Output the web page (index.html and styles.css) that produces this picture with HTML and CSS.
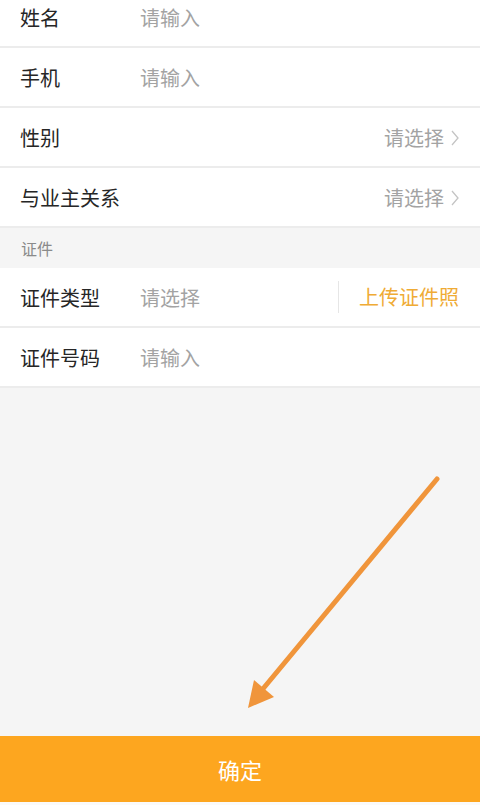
FILE: index.html
```html
<!DOCTYPE html>
<html lang="zh">
<head>
<meta charset="utf-8">
<link rel="stylesheet" href="styles.css">
</head>
<body>
<div class="page">
  <div class="list">
    <div class="row first"><span class="label">姓名</span><span class="ph">请输入</span></div>
    <div class="row"><span class="label">手机</span><span class="ph">请输入</span></div>
    <div class="row"><span class="label">性别</span><span class="select">请选择<svg class="chev" viewBox="0 0 8 16" width="8" height="16"><path d="M1 1 L7 8 L1 15" fill="none" stroke="#c4c4c4" stroke-width="1.3"/></svg></span></div>
    <div class="row"><span class="label">与业主关系</span><span class="select">请选择<svg class="chev" viewBox="0 0 8 16" width="8" height="16"><path d="M1 1 L7 8 L1 15" fill="none" stroke="#c4c4c4" stroke-width="1.3"/></svg></span></div>
    <div class="section">证件</div>
    <div class="row"><span class="label">证件类型</span><span class="ph grow">请选择</span><span class="upload">上传证件照</span></div>
    <div class="row"><span class="label">证件号码</span><span class="ph">请输入</span></div>
  </div>
  <div class="spacer"></div>
  <div class="btn">确定</div>
  <div class="foot"></div>
  <svg class="arrow" width="480" height="805" viewBox="0 0 480 805">
    <line x1="437" y1="479" x2="262" y2="690" stroke="#f0953b" stroke-width="5" stroke-linecap="round"/>
    <polygon points="248,708 254,680 274,697" fill="#f0953b"/>
  </svg>
</div>
</body>
</html>
```
FILE: styles.css
```css
html, body {
  margin: 0;
  padding: 0;
}
body {
  font-family: "Noto Sans CJK SC", "Noto Sans", sans-serif;
  background: #f5f5f5;
  overflow: hidden;
}
.page {
  position: relative;
  width: 480px;
  height: 805px;
  display: flex;
  flex-direction: column;
  overflow: hidden;
}
.list {
  display: flex;
  flex-direction: column;
  margin-top: -12px;
}
.row {
  height: 58px;
  border-bottom: 2px solid #ececec;
  background: #fff;
  display: flex;
  align-items: center;
  padding: 0 21px 0 20px;
  font-size: 20px;
}
.label {
  width: 120px;
  color: #262626;
  flex-shrink: 0;
}
.ph {
  color: #a3a3a3;
}
.grow {
  flex: 1;
}
.select {
  margin-left: auto;
  color: #a3a3a3;
  display: flex;
  align-items: center;
  gap: 7px;
}
.chev {
  display: block;
  margin-top: 1px;
}
.upload {
  color: #efab35;
  border-left: 1px solid #e6e6e6;
  padding-left: 20px;
  height: 32px;
  line-height: 32px;
}
.section {
  height: 40px;
  display: flex;
  align-items: center;
  padding-left: 21px;
  font-size: 16px;
  color: #8a8a8a;
  background: #f5f5f5;
}
.spacer {
  flex: 1;
}
.btn {
  height: 66px;
  background: #fda61f;
  color: #fff;
  font-size: 22px;
  display: flex;
  align-items: center;
  justify-content: center;
}
.foot {
  height: 3px;
  background: #fafafa;
}
.arrow {
  position: absolute;
  left: 0;
  top: 0;
  pointer-events: none;
}
```
